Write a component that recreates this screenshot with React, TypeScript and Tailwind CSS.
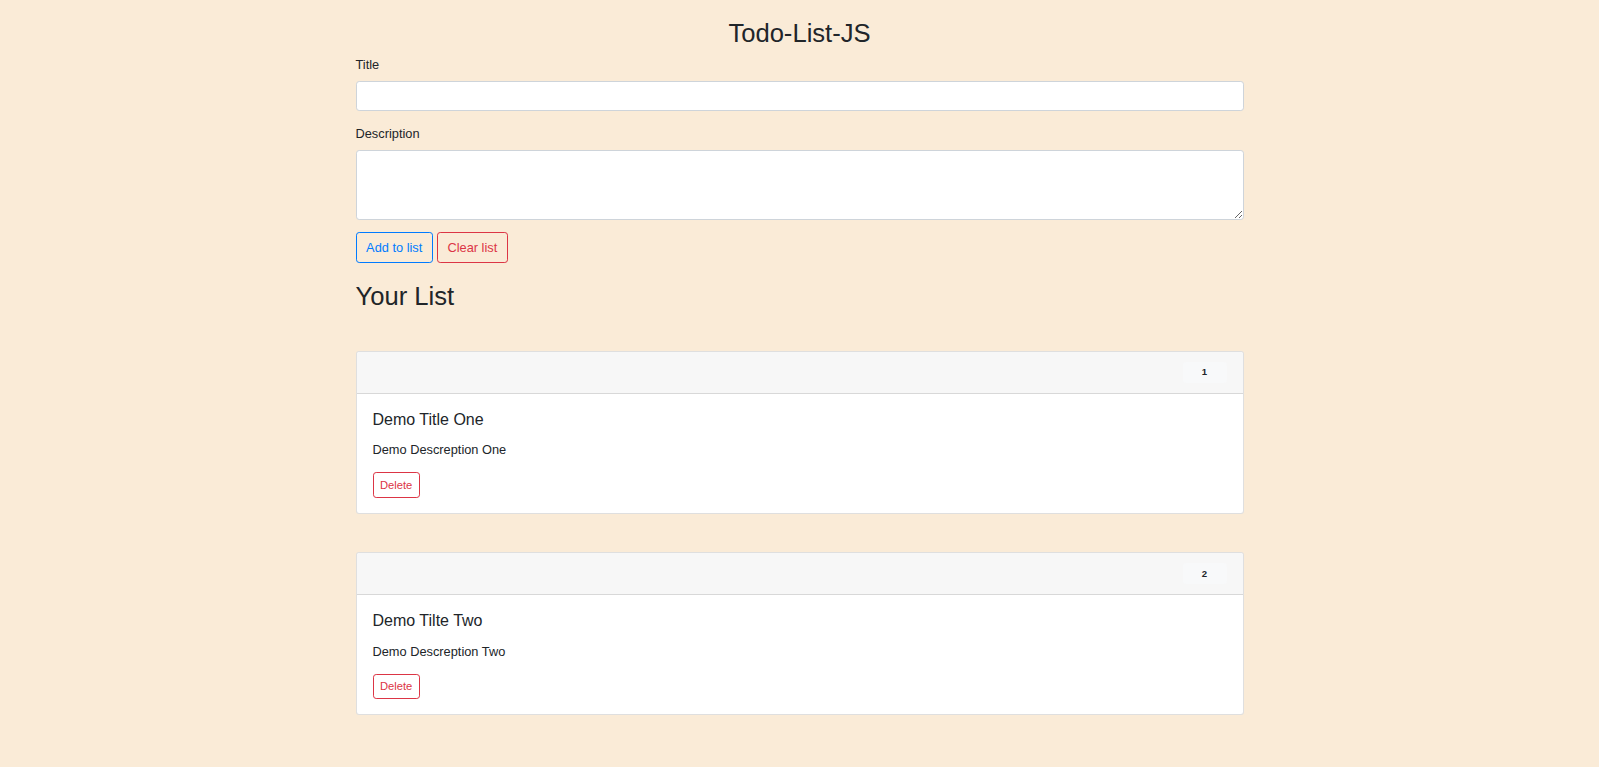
import { useState } from "react";

type Todo = { title: string; desc: string };

const initial: Todo[] = [
  { title: "Demo Title One", desc: "Demo Descreption One" },
  { title: "Demo Tilte Two", desc: "Demo Descreption Two" },
];

function TodoCard({ todo, index, onDelete }: { todo: Todo; index: number; onDelete: () => void }) {
  return (
    <div className="bg-white border border-black/[.125] rounded-[3.2px]">
      <div className="flex justify-end bg-[#f7f7f7] border-b border-black/[.125] px-4 py-[10px] rounded-t-[3.2px]">
        <span className="flex items-center justify-center w-[44px] h-[21px] bg-[#f8f9fa] rounded-[3.2px] text-[9.6px] font-bold leading-none">
          {index + 1}
        </span>
      </div>
      <div className="px-4 pt-4 pb-[15px]">
        <h5 className="text-[16px] leading-[1.2] font-normal mb-[11.6px]">{todo.title}</h5>
        <p className="mb-[12.8px]">{todo.desc}</p>
        <button
          onClick={onDelete}
          className="border border-[#dc3545] text-[#dc3545] rounded-[3.2px] px-[6.4px] py-[3.2px] text-[11.2px] leading-[1.5]"
        >
          Delete
        </button>
      </div>
    </div>
  );
}

export default function App() {
  const [todos, setTodos] = useState<Todo[]>(initial);
  const [title, setTitle] = useState("");
  const [desc, setDesc] = useState("");

  function add() {
    if (!title.trim()) return;
    setTodos([...todos, { title, desc }]);
    setTitle("");
    setDesc("");
  }

  return (
    <div className="min-h-screen bg-[#faebd7] text-[#212529] text-[12.8px] leading-[1.5] font-['Liberation_Sans',Arial,sans-serif]">
      <div className="mx-auto w-[912px] px-[12px] pt-[18px] pb-[20px]">
        <h2 className="text-center text-[25.6px] leading-[1.2] font-normal mb-[6.4px]">Todo-List-JS</h2>

        <div className="mb-[12.8px]">
          <label className="block mb-[6.4px]">Title</label>
          <input
            value={title}
            onChange={(e) => setTitle(e.target.value)}
            className="block w-full h-[30.4px] bg-white border border-[#ced4da] rounded-[3.2px] px-[9.6px] outline-none"
          />
        </div>

        <div className="mb-[12.8px]">
          <label className="block mb-[7.4px]">Description</label>
          <textarea
            rows={3}
            value={desc}
            onChange={(e) => setDesc(e.target.value)}
            className="block w-full h-[69.2px] bg-white border border-[#ced4da] rounded-[3.2px] px-[9.6px] py-[4.8px] outline-none"
          />
        </div>

        <div className="flex gap-[4px]">
          <button
            onClick={add}
            className="border border-[#007bff] text-[#007bff] rounded-[3.2px] px-[9.6px] py-[4.8px] leading-[1.5]"
          >
            Add to list
          </button>
          <button
            onClick={() => setTodos([])}
            className="border border-[#dc3545] text-[#dc3545] rounded-[3.2px] px-[9.6px] py-[4.8px] leading-[1.5]"
          >
            Clear list
          </button>
        </div>

        <h2 className="text-[25.6px] leading-[1.2] font-normal mt-[18.2px]">Your List</h2>

        <div className="flex flex-col gap-[38.4px] mt-[38.5px]">
          {todos.map((t, i) => (
            <TodoCard key={i} todo={t} index={i} onDelete={() => setTodos(todos.filter((_, j) => j !== i))} />
          ))}
        </div>
      </div>
    </div>
  );
}
